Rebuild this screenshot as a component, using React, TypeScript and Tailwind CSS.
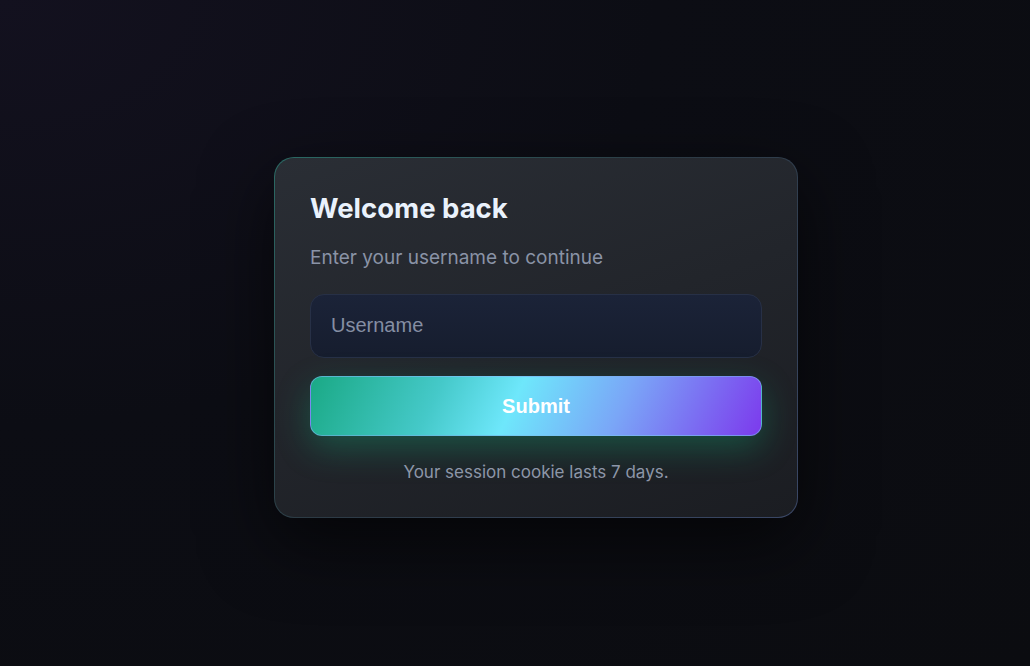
export default function App() {
  return (
    <div className="min-h-screen w-full flex items-center justify-center bg-[radial-gradient(ellipse_at_top_left,#13111f_0%,#0c0d14_45%,#0b0c10_100%)] font-['Inter',sans-serif]">
      <div className="ml-[42px] mt-[8px] rounded-[20px] p-px bg-[linear-gradient(135deg,#2a6a64_0%,#2c3a44_45%,#3a4766_100%)] shadow-[0_24px_70px_rgba(0,0,0,0.6)]">
        <div className="w-[522px] rounded-[19px] bg-[linear-gradient(160deg,#2a2e35_0%,#22252b_50%,#1b1d22_100%)] px-[35px] pt-[33px] pb-[32px]">
          <h1 className="text-[27.5px] leading-[34px] font-bold text-[#eaf2fc]">Welcome back</h1>
          <p className="mt-[19px] text-[19px] leading-[28px] text-[#8a93a6]">Enter your username to continue</p>
          <input
            placeholder="Username"
            className="mt-[22px] block w-full h-[64px] rounded-[14px] border border-[#273046] bg-[linear-gradient(180deg,#1b2338,#161d2e)] px-5 text-[20px] font-['Liberation_Sans',Arial,sans-serif] text-white placeholder:text-[#858ea3] outline-none"
          />
          <button className="mt-[18px] block w-full h-[60px] rounded-[12px] border border-[#7ab8f0]/60 bg-[linear-gradient(115deg,#1aa985_0%,#45c9c9_28%,#6ee7fb_45%,#7aa6f7_68%,#7c3aed_100%)] text-[20px] font-bold text-white font-['Liberation_Sans',Arial,sans-serif] shadow-[0_12px_34px_rgba(16,185,129,0.32)]">
            Submit
          </button>
          <p className="mt-[23px] text-center text-[17px] leading-[26px] text-[#8d96a8]">Your session cookie lasts 7 days.</p>
        </div>
      </div>
    </div>
  )
}
